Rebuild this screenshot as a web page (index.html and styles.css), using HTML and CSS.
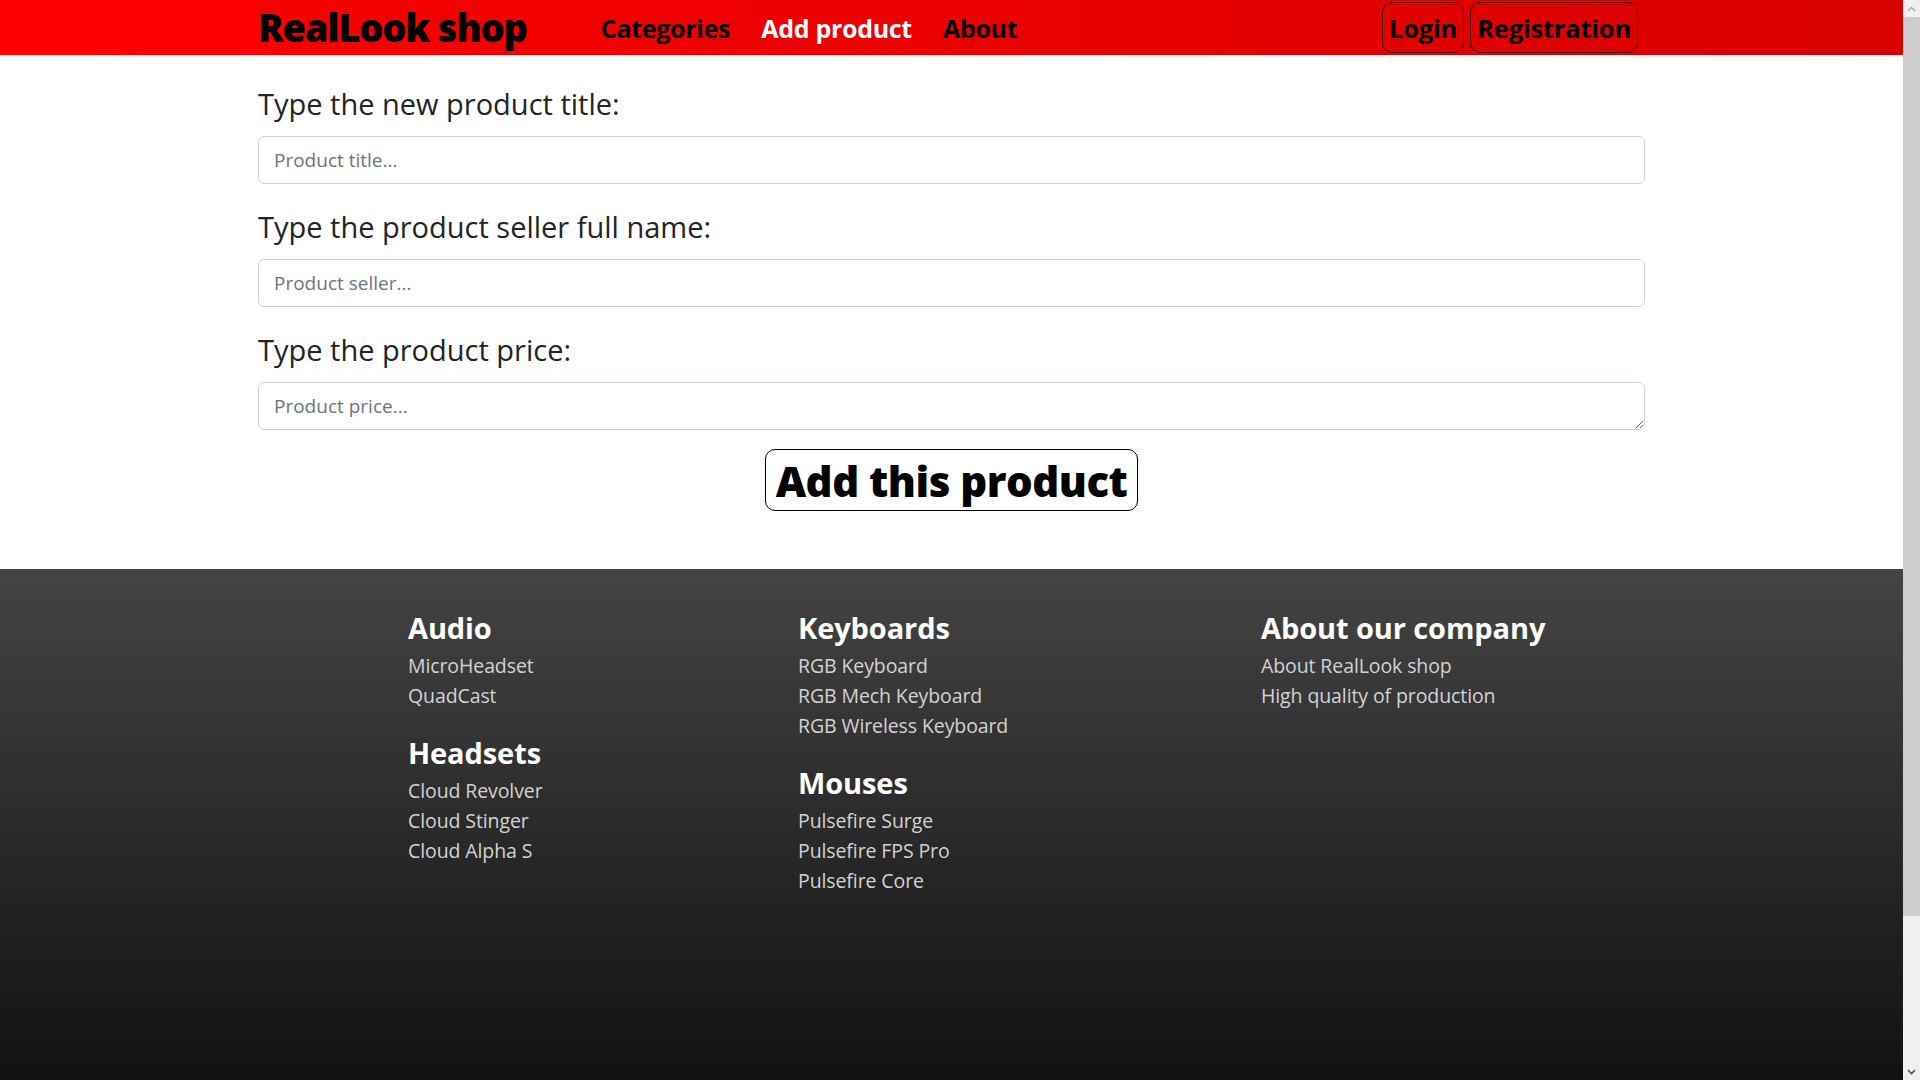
FILE: index.html
```html
<!DOCTYPE html>
<html lang="en">
<head>
<meta charset="utf-8">
<title>RealLook shop - Add product</title>
<link rel="stylesheet" href="styles.css">
</head>
<body>
<header class="topbar">
  <div class="container topbar-inner">
    <a class="logo" href="#">RealLook shop</a>
    <nav class="nav">
      <a class="nav-link" href="#">Categories</a>
      <a class="nav-link active" href="#">Add product</a>
      <a class="nav-link" href="#">About</a>
    </nav>
    <div class="auth">
      <button class="auth-btn">Login</button>
      <button class="auth-btn">Registration</button>
    </div>
  </div>
</header>

<main class="container form-area">
  <div class="field">
    <h3 class="field-label">Type the new product title:</h3>
    <input class="control" type="text" placeholder="Product title...">
  </div>
  <div class="field">
    <h3 class="field-label">Type the product seller full name:</h3>
    <input class="control" type="text" placeholder="Product seller...">
  </div>
  <div class="field last">
    <h3 class="field-label">Type the product price:</h3>
    <textarea class="control area" rows="1" placeholder="Product price..."></textarea>
  </div>
  <div class="submit-row">
    <button class="submit-btn">Add this product</button>
  </div>
</main>

<footer class="footer">
  <div class="container footer-grid">
    <div class="footer-col">
      <section class="footer-sec">
        <h4 class="footer-title">Audio</h4>
        <a class="footer-link" href="#">MicroHeadset</a>
        <a class="footer-link" href="#">QuadCast</a>
      </section>
      <section class="footer-sec">
        <h4 class="footer-title">Headsets</h4>
        <a class="footer-link" href="#">Cloud Revolver</a>
        <a class="footer-link" href="#">Cloud Stinger</a>
        <a class="footer-link" href="#">Cloud Alpha S</a>
      </section>
    </div>
    <div class="footer-col">
      <section class="footer-sec">
        <h4 class="footer-title">Keyboards</h4>
        <a class="footer-link" href="#">RGB Keyboard</a>
        <a class="footer-link" href="#">RGB Mech Keyboard</a>
        <a class="footer-link" href="#">RGB Wireless Keyboard</a>
      </section>
      <section class="footer-sec">
        <h4 class="footer-title">Mouses</h4>
        <a class="footer-link" href="#">Pulsefire Surge</a>
        <a class="footer-link" href="#">Pulsefire FPS Pro</a>
        <a class="footer-link" href="#">Pulsefire Core</a>
      </section>
    </div>
    <div class="footer-col">
      <section class="footer-sec">
        <h4 class="footer-title">About our company</h4>
        <a class="footer-link" href="#">About RealLook shop</a>
        <a class="footer-link" href="#">High quality of production</a>
      </section>
    </div>
  </div>
</footer>

<div class="scrollbar" aria-hidden="true">
  <div class="sb-btn">
    <svg width="9" height="6" viewBox="0 0 9 6"><path d="M1 5 L4.5 1.5 L8 5" fill="none" stroke="#a3a3a3" stroke-width="1.4"/></svg>
  </div>
  <div class="sb-track">
    <div class="sb-thumb"></div>
  </div>
  <div class="sb-btn">
    <svg width="9" height="6" viewBox="0 0 9 6"><path d="M1 1 L4.5 4.5 L8 1" fill="none" stroke="#505050" stroke-width="1.6"/></svg>
  </div>
</div>
</body>
</html>
```

FILE: styles.css
```css
* { box-sizing: border-box; }

body {
  margin: 0 17px 0 0;
  font-family: "Open Sans", "Noto Sans", Arial, sans-serif;
  color: #212529;
  background: #fff;
}

a { text-decoration: none; }

.container {
  width: 1387px;
  margin: 0 auto;
}

/* Header */
.topbar {
  height: 55px;
  background: linear-gradient(90deg, #ff0000 0%, #d80000 100%);
}
.topbar-inner {
  display: flex;
  align-items: center;
  height: 55px;
}
.logo {
  font-size: 38px;
  font-weight: 800;
  color: #000;
  letter-spacing: -1.2px;
  margin-right: 74px;
  line-height: 55px;
}
.nav {
  display: flex;
  gap: 31px;
}
.nav-link {
  font-size: 25px;
  font-weight: 700;
  color: #000;
  letter-spacing: -0.3px;
}
.nav-link.active { color: #fff; }

.auth {
  margin-left: auto;
  margin-right: 7px;
  display: flex;
  gap: 6px;
  align-self: flex-start;
  padding-top: 2px;
}
.auth-btn {
  height: 51px;
  padding: 0 6px;
  background: transparent;
  border: 1px solid #3a0000;
  border-radius: 10px;
  font-family: inherit;
  font-size: 25.5px;
  font-weight: 700;
  color: #000;
  letter-spacing: -0.2px;
}

/* Form */
.form-area {
  padding-top: 32px;
  padding-bottom: 58px;
}
.field { margin-bottom: 26px; }
.field.last { margin-bottom: 19px; }
.field-label {
  margin: 0 0 15px;
  font-size: 29px;
  line-height: 34px;
  font-weight: 500;
  letter-spacing: 0;
  color: #212529;
}
.control {
  display: block;
  width: 100%;
  height: 48px;
  padding: 8px 15px;
  font-family: inherit;
  font-size: 19px;
  line-height: 30px;
  color: #212529;
  background: #fff;
  border: 1px solid #ced4da;
  border-radius: 6px;
  outline: none;
}
.control::placeholder { color: #6c757d; }
.area {
  resize: vertical;
  min-height: 48px;
  overflow: hidden;
}

.submit-row {
  display: flex;
  justify-content: center;
}
.submit-btn {
  height: 62px;
  padding: 0 10px;
  background: #fff;
  border: 1px solid #000;
  border-radius: 10px;
  font-family: inherit;
  font-size: 42px;
  font-weight: 800;
  color: #000;
  letter-spacing: -0.5px;
}

/* Footer */
.footer {
  min-height: 686px;
  background: linear-gradient(180deg, #444444 0%, #000000 100%);
  padding-top: 42px;
}
.footer-grid {
  display: grid;
  grid-template-columns: 390px 463px auto;
  padding-left: 150px;
}
.footer-sec { margin-bottom: 25px; }
.footer-title {
  margin: 0 0 6px;
  font-size: 29px;
  line-height: 34px;
  font-weight: 700;
  color: #fff;
  letter-spacing: -0.1px;
}
.footer-link {
  display: block;
  font-size: 19.5px;
  line-height: 30px;
  color: #d3d3d3;
  letter-spacing: -0.1px;
}

/* Scrollbar (drawn over the right edge, like the browser's own) */
.scrollbar {
  position: fixed;
  top: 0;
  right: 0;
  width: 17px;
  height: 100vh;
  background: #f0f0f0;
  display: flex;
  flex-direction: column;
}
.sb-btn {
  height: 17px;
  display: flex;
  align-items: center;
  justify-content: center;
  flex: none;
}
.sb-track {
  flex: 1;
  display: flex;
  flex-direction: column;
}
.sb-thumb {
  height: 899px;
  background: #cdcdcd;
}
```
